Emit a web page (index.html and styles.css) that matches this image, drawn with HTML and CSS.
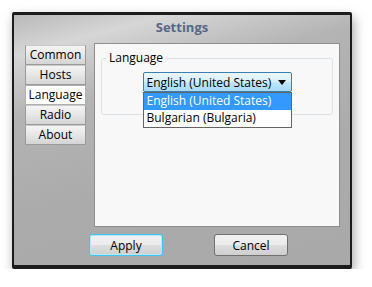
FILE: index.html
```html
<!DOCTYPE html>
<html lang="en">
<head>
    <meta charset="UTF-8">
    <title>Settings</title>
    <link rel="stylesheet" href="styles.css">
</head>
<body>
    <div class="window">
        <div class="title">Settings</div>
        <div class="main">
            <div class="tabs">
                <div class="tab">Common</div>
                <div class="tab">Hosts</div>
                <div class="tab selected">Language</div>
                <div class="tab">Radio</div>
                <div class="tab">About</div>
            </div>
            <div class="panel">
                <fieldset class="group">
                    <legend>Language</legend>
                    <div class="combo-wrap">
                        <div class="combo">
                            <span>English (United States)</span>
                            <span class="arrow"></span>
                        </div>
                        <div class="dropdown">
                            <div class="item active">English (United States)</div>
                            <div class="item">Bulgarian (Bulgaria)</div>
                        </div>
                    </div>
                </fieldset>
            </div>
        </div>
        <div class="buttons">
            <button class="btn default">Apply</button>
            <button class="btn">Cancel</button>
        </div>
    </div>
</body>
</html>
```

FILE: styles.css
```css
body { margin: 0; background: #fff; font-family: "Open Sans", "Noto Sans", sans-serif; font-size: 12px; color: #000; }
.window { margin: 12px 0 0 12px; width: 336px; height: 250px; border: solid #1c1c1c; border-width: 3px 2px 4px 2px; border-radius: 2px; box-shadow: 2px 5px 12px rgba(0,0,0,0.35); background: linear-gradient(165deg, #b9b9b9 0%, #d6d6d6 12%, #b4b4b4 30%, #ababab 60%, #a9a9a9 100%); display: flex; flex-direction: column; }
.title { height: 28px; line-height: 25px; text-align: center; font-weight: bold; font-size: 13px; color: #566788; }
.main { display: flex; padding: 0 9px 0 11px; }
.tabs { width: 61px; margin-top: 2px; display: flex; flex-direction: column; }
.tab { height: 18px; line-height: 18px; text-align: center; border: 1px solid #9a9a9a; border-top-color: #c8c8c8; background: linear-gradient(#f4f4f4, #e6e6e6 50%, #d4d4d4); }
.tab.selected { background: #fff; border-color: #b0b0b0; }
.panel { margin-left: 8px; width: 244px; height: 182px; border: 1px solid #8e8e8e; background: #f8f8f8; }
.group { margin: 7px 6px 0 6px; padding: 0; height: 62px; border: 1px solid #dce3e8; border-radius: 3px; }
.group legend { margin-left: 4px; padding: 0 3px; font-size: 12px; line-height: 14px; }
.combo-wrap { position: relative; width: 149px; margin: 7px auto 0; }
.combo { height: 18px; border: 1px solid #3c7fb1; border-radius: 2px; background: linear-gradient(#eaf6fd, #d9f0fc 45%, #bee6fd 55%, #a7d9f5); display: flex; align-items: center; justify-content: space-between; padding: 0 5px 0 3px; }
.arrow { width: 0; height: 0; border-left: 4px solid transparent; border-right: 4px solid transparent; border-top: 5px solid #000; }
.dropdown { position: absolute; left: 0; top: 20px; width: 147px; border: 1px solid #646464; background: #fff; }
.item { height: 17px; line-height: 16px; padding-left: 3px; }
.item.active { background: #3399ff; color: #fff; }
.buttons { display: flex; gap: 51px; padding-left: 75px; margin-top: 7px; }
.btn { width: 74px; height: 22px; padding: 0; font-family: inherit; font-size: 12px; color: #000; border: 1px solid #707070; border-radius: 3px; background: linear-gradient(#f2f2f2, #ebebeb 50%, #dddddd 51%, #cfcfcf); }
.btn.default { border-color: #3cc7f0; box-shadow: inset 0 0 0 1px #b8e6f6; }
```
